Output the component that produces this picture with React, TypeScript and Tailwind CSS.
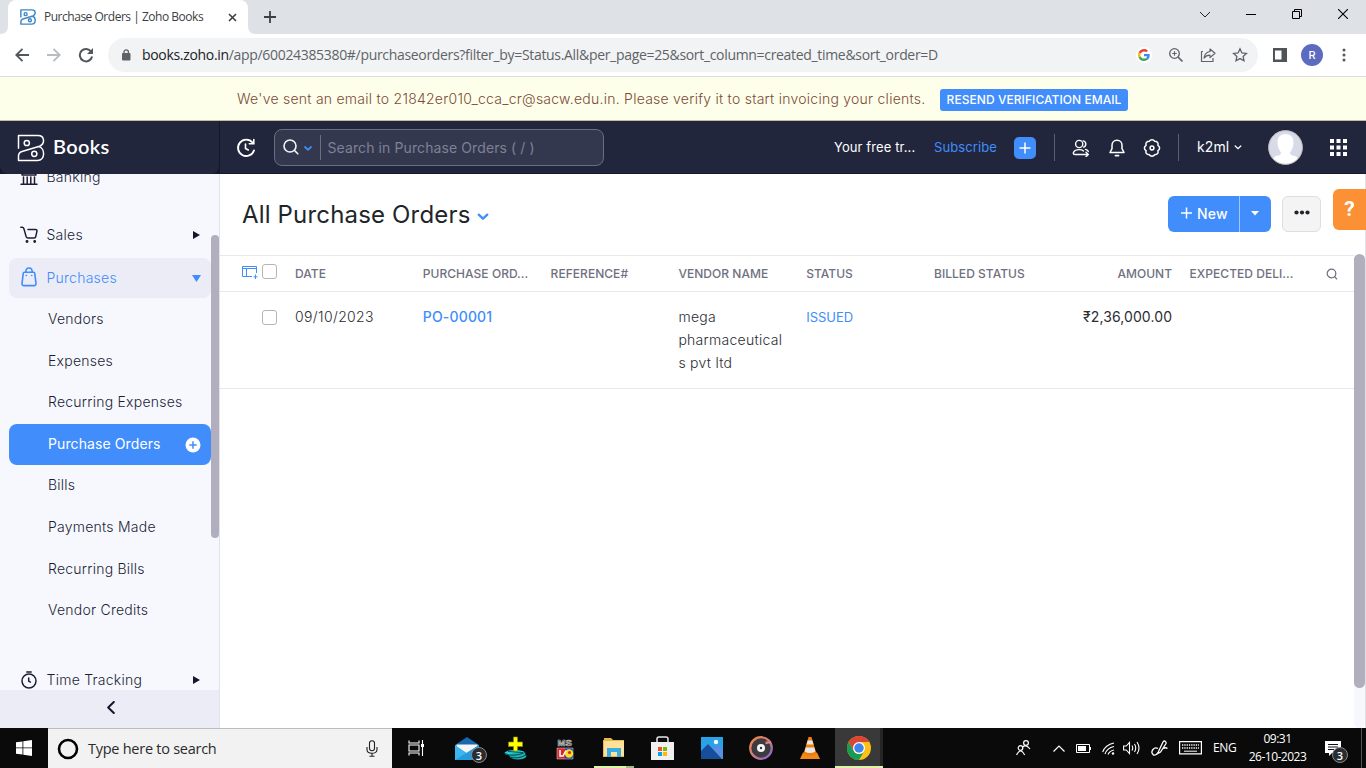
import React from "react";

const inter = "font-['Inter',sans-serif]";
const segoe = "font-['Open_Sans','Noto_Sans',sans-serif]";

function BooksMark({ size, stroke, width }: { size: number; stroke: string; width: number }) {
  return (
    <svg width={size} height={size} viewBox="0 0 28 28" fill="none" stroke={stroke} strokeWidth={width} className="shrink-0">
      <path d="M1.500 14.800V1.500H21C28 1.500 28.200 10 22.500 12.200L5 17.500C2.600 18.300 1.500 19.600 1.500 22V26.500H20.500C28.500 26.500 28.500 14 21.500 12.600" strokeLinejoin="round" />
      <circle cx="9.800" cy="9" r="2.600" />
      <circle cx="17.300" cy="19.800" r="2.600" />
    </svg>
  );
}

function TabStrip() {
  return (
    <div className="flex h-[34px] shrink-0 bg-[#dee1e6]">
      <svg width="8" height="34" className="shrink-0"><path d="M0 34Q8 34 8 26V34Z" fill="#fff" /></svg>
      <div className="flex w-[240px] shrink-0 items-center rounded-t-lg bg-white pl-3 pr-[11px]">
        <BooksMark size={16} stroke="#3f86c6" width={2.5} />
        <span className={`${segoe} ml-[8px] w-[170px] whitespace-nowrap text-[12px] leading-4 tracking-[-0.48px] text-[#3c4043]`}>
          Purchase Orders | Zoho Books
        </span>
        <svg width="9" height="9" viewBox="0 0 9 9" className="ml-auto" stroke="#3c4043" strokeWidth="1.6"><path d="M1 1l7 7M8 1l-7 7" /></svg>
      </div>
      <svg width="8" height="34" className="shrink-0"><path d="M8 34Q0 34 0 26V34Z" fill="#fff" /></svg>
      <svg width="12" height="12" viewBox="0 0 12 12" className="ml-2 mt-[11px]" stroke="#3c4043" strokeWidth="1.8"><path d="M6 0v12M0 6h12" /></svg>
      <div className="ml-auto flex h-7 items-center">
        <svg width="12" height="7" viewBox="0 0 12 7" fill="none" stroke="#222" className="mr-[35px]"><path d="M1 1l5 5 5-5" /></svg>
        <svg width="10" height="10" viewBox="0 0 10 10" stroke="#000" className="mr-9"><path d="M0 5.500h10" /></svg>
        <svg width="10" height="10" viewBox="0 0 10 10" fill="none" stroke="#000" className="mr-9"><path d="M.5 2.500h7v7h-7zM2.500 2.500v-2h7v7h-2" /></svg>
        <svg width="10" height="10" viewBox="0 0 10 10" stroke="#000" strokeWidth="1.100" className="mr-[18px]"><path d="M0 0l10 10M10 0L0 10" /></svg>
      </div>
    </div>
  );
}

function AddressBar() {
  return (
    <div className="flex h-[43px] shrink-0 items-center border-b border-[#dadce0] bg-white">
      <svg width="14" height="14" viewBox="0 0 14 14" fill="none" stroke="#53575b" strokeWidth="1.9" className="ml-[15px]"><path d="M14 7H1.500M7.500 .8L1.300 7l6.200 6.200" /></svg>
      <svg width="14" height="14" viewBox="0 0 14 14" fill="none" stroke="#b9bcbf" strokeWidth="1.900" className="ml-[18px]"><path d="M0 7h12.500M6.500 .8L12.700 7l-6.200 6.200" /></svg>
      <svg width="16" height="16" viewBox="0 0 16 16" fill="none" className="ml-[17px]"><path d="M13.200 4.700A6.200 6.200 0 1 0 14.100 9.500" stroke="#53575b" strokeWidth="2" /><path d="M15 1v6H9z" fill="#53575b" /></svg>
      <div className="ml-[14px] flex h-[34px] w-[1150px] shrink-0 items-center rounded-full bg-[#f1f3f4]">
        <svg width="10" height="12" viewBox="0 0 10 12" className="ml-[13px]"><rect x="1" y="4" width="8.500" height="7.500" rx="1" fill="#5f6368" /><path d="M3 4.500V3a2.200 2.200 0 0 1 4.400 0v1.500" fill="none" stroke="#5f6368" strokeWidth="1.300" /></svg>
        <span className={`${segoe} ml-[11px] whitespace-nowrap text-[14px] leading-5 tracking-[-0.32px] text-[#5f6368]`}>
          <span className="text-[#202124]">books.zoho.in</span>/app/60024385380#/purchaseorders?filter_by=Status.All&amp;per_page=25&amp;sort_column=created_time&amp;sort_order=D
        </span>
        <div className="ml-auto flex items-center pr-[10px]">
          <span className="mr-4 flex size-4 items-center justify-center rounded-full bg-white">
            <svg width="12" height="12" viewBox="0 0 48 48"><path fill="#EA4335" d="M24 9.500c3.540 0 6.710 1.220 9.210 3.600l6.850-6.850C35.900 2.380 30.470 0 24 0 14.620 0 6.510 5.380 2.560 13.220l7.980 6.190C12.430 13.720 17.740 9.500 24 9.500z" /><path fill="#4285F4" d="M46.980 24.550c0-1.570-.15-3.090-.38-4.550H24v9.020h12.940c-.58 2.960-2.260 5.480-4.780 7.180l7.730 6c4.510-4.180 7.090-10.360 7.090-17.650z" /><path fill="#FBBC05" d="M10.530 28.590c-.48-1.450-.76-2.990-.76-4.590s.27-3.140.76-4.590l-7.980-6.190C.92 16.460 0 20.120 0 24s.92 7.540 2.560 10.780l7.970-6.190z" /><path fill="#34A853" d="M24 48c6.480 0 11.930-2.130 15.890-5.810l-7.730-6c-2.150 1.450-4.920 2.300-8.160 2.300-6.260 0-11.570-4.220-13.470-9.910l-7.980 6.190C6.510 42.620 14.620 48 24 48z" /></svg>
          </span>
          <svg width="16" height="16" viewBox="0 0 16 16" fill="none" stroke="#5f6368" strokeWidth="1.300" className="mr-4"><circle cx="6.500" cy="6.500" r="4.800" /><path d="M10 10l4.500 4.500" strokeWidth="1.700" /><path d="M4.200 6.500h4.600M6.500 4.200v4.600" strokeWidth="1.100" /></svg>
          <svg width="16" height="16" viewBox="0 0 16 16" fill="none" stroke="#5f6368" strokeWidth="1.200" className="mr-4" strokeLinejoin="round"><path d="M3 4.500H1.500v10h11.500V11" /><path d="M10 2l5 4.300-5 4.300V8.200C7.500 8.200 5.500 9 4 11.200 4.400 7.500 6.500 5 10 4.500z" /></svg>
          <svg width="16" height="16" viewBox="0 0 16 16" fill="none" stroke="#5f6368" strokeWidth="1.300"><path d="M8 1.800l1.900 4.100 4.500.5-3.300 3 .9 4.400L8 11.600l-4 2.200.9-4.400-3.300-3 4.500-.5z" /></svg>
        </div>
      </div>
      <svg width="14" height="14" viewBox="0 0 14 14" className="ml-[15px]"><path fillRule="evenodd" fill="#505458" d="M0 0h14v14H0zM2 2.500h6.500v9H2z" /></svg>
      <span className={`${inter} ml-[14px] flex size-[22px] items-center justify-center rounded-full bg-[#5c6bc0] text-[11px] font-medium text-white`}>R</span>
      <svg width="4" height="14" viewBox="0 0 4 14" className="ml-[19px]" fill="#53575b"><circle cx="2" cy="2" r="1.500" /><circle cx="2" cy="7" r="1.500" /><circle cx="2" cy="12" r="1.500" /></svg>
    </div>
  );
}

function VerifyBanner() {
  return (
    <div className="flex h-11 shrink-0 items-center border-b border-[#c9bd97] bg-[#fdffea] pl-[237px]">
      <span className="w-[703px] whitespace-nowrap text-[14px] leading-5 font-light tracking-[0.25px] text-[#7c4a36]">
        We've sent an email to 21842er010_cca_cr@sacw.edu.in. Please verify it to start invoicing your clients.
      </span>
      <span className="mt-[2px] flex h-[22px] w-[188px] items-center justify-center whitespace-nowrap rounded-[3px] bg-[#408dfb] text-[12px] font-medium tracking-[0.06px] text-white">
        RESEND VERIFICATION EMAIL
      </span>
    </div>
  );
}

function AppHeader() {
  return (
    <div className="flex h-[53px] shrink-0 bg-[#15172b]">
      <div className="flex w-[219px] shrink-0 items-center rounded-b-lg bg-[#21263c] pl-[17px]">
        <BooksMark size={28} stroke="#fff" width={1.5} />
        <span className="-mt-[3px] ml-2 font-['Lato',sans-serif] text-[20px] leading-6 font-semibold tracking-[0.3px] text-white">Books</span>
      </div>
      <div className="ml-px flex min-w-0 flex-1 items-center border-b border-[#171a2d] bg-[#21263c]">
        <svg width="20" height="20" viewBox="0 0 20 20" fill="none" stroke="#fff" strokeWidth="1.900" className="mt-[2px] ml-4" strokeLinecap="round"><path d="M16.500 4.500A8.200 8.200 0 1 0 18 12.500" /><path d="M17.800 1.500v4.300h-4.500" strokeWidth="1.600" /><path d="M9.500 6v4.500l2.800 1.500" strokeWidth="1.600" /></svg>
        <div className="ml-[18px] flex h-[37px] w-[330px] shrink-0 items-center rounded-lg border border-[#6b6e81] bg-[#34384f]">
          <svg width="16" height="16" viewBox="0 0 16 16" fill="none" stroke="#f3f3f8" strokeWidth="1.600" className="ml-2" strokeLinecap="round"><circle cx="7" cy="7" r="6" /><path d="M11.500 11.500l3.300 3.300" /></svg>
          <svg width="8" height="5" viewBox="0 0 8 5" fill="none" stroke="#408dfb" strokeWidth="1.800" className="mt-[2px] ml-[5px]" strokeLinecap="round" strokeLinejoin="round"><path d="M1 1l3 2.800L7 1" /></svg>
          <span className="mr-[6.500px] ml-2 h-[25px] w-px bg-[#6b6e81]" />
          <span className="mt-px whitespace-nowrap text-[14px] tracking-[0.1px] text-[#7f8194]">Search in Purchase Orders ( / )</span>
        </div>
        <span className="mt-px ml-[230px] w-[100px] whitespace-nowrap text-[13px] tracking-[0.1px] text-white">Your free tr...</span>
        <span className="mt-px w-20 whitespace-nowrap text-[13px] tracking-[0.1px] text-[#408dfb]">Subscribe</span>
        <span className="mt-px flex h-[22px] w-[22px] items-center justify-center rounded-[5px] bg-[#408dfb]">
          <svg width="12" height="12" viewBox="0 0 12 12" stroke="#fff" strokeWidth="1.500"><path d="M6 .5v11M.5 6h11" /></svg>
        </span>
        <span className="ml-[18px] h-[27px] w-px bg-[#5b5e70]" />
        <svg width="18" height="18" viewBox="0 0 18 18" fill="none" stroke="#fff" strokeWidth="1.400" className="mt-px ml-[17px]" strokeLinecap="round" strokeLinejoin="round"><circle cx="7.200" cy="5" r="3.600" /><path d="M11.200 1.900a3.300 3.300 0 0 1 .5 6.300" /><path d="M9 15.500H3.200c-1.500 0-2.200-.8-1.700-2 .8-1.900 3-2.900 5.700-2.900 2 0 3.300.4 4.300 1.300M13.500 10.400c1.500.4 2.500 1.100 2.800 2.100M8.500 15.500H16M14 13.300l2.300 2.200-2.300 2.200" /></svg>
        <svg width="18" height="18" viewBox="0 0 18 18" fill="none" stroke="#fff" strokeWidth="1.500" className="mt-px ml-[18px]" strokeLinecap="round" strokeLinejoin="round"><path d="M9 1.200c-3 0-5 2.200-5 5v3.500l-2 3.800h14l-2-3.800V6.200c0-2.800-2-5-5-5z" /><path d="M7.500 16.600h3" strokeWidth="1.800" /></svg>
        <svg width="18" height="18" viewBox="0 0 18 18" fill="none" stroke="#fff" strokeWidth="1.500" className="mt-px ml-[17px]" strokeLinejoin="round"><path d="M6.300 2.300C6.900 1.200 7.800.8 9 .8s2.100.4 2.700 1.500c1.300 0 2.200.3 2.900 1.100.6.800.7 1.700.3 2.900 1.200.7 1.700 1.600 1.700 2.700s-.5 2-1.700 2.700c.4 1.200.3 2.100-.3 2.900-.7.800-1.600 1.100-2.900 1.100-.6 1.100-1.500 1.500-2.700 1.500s-2.100-.4-2.700-1.500c-1.300 0-2.200-.3-2.900-1.100-.6-.8-.7-1.700-.3-2.900C1.900 11 1.400 10.100 1.400 9s.5-2 1.700-2.700c-.4-1.200-.3-2.100.3-2.900.7-.8 1.600-1.100 2.900-1.100z" /><circle cx="9" cy="9" r="1.900" /></svg>
        <span className="ml-[17px] h-[27px] w-px bg-[#5b5e70]" />
        <span className="-mt-px ml-[18px] w-[37px] whitespace-nowrap text-[14px] tracking-[0.1px] text-white">k2ml</span>
        <svg width="8" height="5" viewBox="0 0 8 5" fill="none" stroke="#fff" strokeWidth="1.300" strokeLinecap="round"><path d="M1.200 1L4 3.700 6.800 1" /></svg>
        <svg width="35" height="35" viewBox="0 0 35 35" className="ml-[26px]"><defs><clipPath id="face"><circle cx="17.500" cy="17.500" r="16.500" /></clipPath></defs><circle cx="17.500" cy="17.500" r="17" fill="#d8dbe7" /><path clipPath="url(#face)" fill="#fff" d="M9.500 12c0-5 3.200-8 8-8s8 3 8 8c0 4-1.200 8-3.500 10.500.3 2.500 1.500 3 4.500 3.500 3 .6 4 2.500 4 9h-26c0-6.500 1-8.400 4-9 3-.5 4.200-1 4.500-3.500C10.700 20 9.500 16 9.500 12z" /><circle cx="17.500" cy="17.500" r="16.900" fill="none" stroke="#bbb9b7" strokeWidth="1" /></svg>
        <svg width="17" height="17" viewBox="0 0 17 17" fill="#fff" className="ml-[27px]">
          {[0, 6.5, 13].map((y) => [0, 6.500, 13].map((x) => <rect key={`${x}-${y}`} x={x} y={y} width="4" height="4" />))}
        </svg>
      </div>
    </div>
  );
}

const purchaseLinks = ["Vendors", "Expenses", "Recurring Expenses", "Purchase Orders", "Bills", "Payments Made", "Recurring Bills", "Vendor Credits"];

function NavRow({ icon, label, arrow, active = false }: { icon: React.ReactNode; label: string; arrow?: "right" | "down"; active?: boolean }) {
  return (
    <div className={`mx-[9px] flex h-10 w-[202px] shrink-0 items-center rounded-lg pl-[11px] pr-[10px] text-[14px] ${active ? "bg-[#ececf7] font-light tracking-[0.25px] text-[#408dfb]" : "font-light tracking-[0.25px] text-[#1b1f35]"}`}>
      <span className="-mt-px">{icon}</span>
      <span className="-mt-px ml-[8.500px] whitespace-nowrap">{label}</span>
      {arrow === "right" && <svg width="7" height="8" viewBox="0 0 7 8" className="ml-auto mr-[1px]"><path d="M0 0l7 4-7 4z" fill="#15172b" /></svg>}
      {arrow === "down" && <svg width="9" height="7" viewBox="0 0 9 7" className="ml-auto"><path d="M0 0h9L4.500 7z" fill="#408dfb" /></svg>}
    </div>
  );
}

function Sidebar() {
  const ink = { fill: "none", stroke: "currentColor", strokeLinecap: "round" as const, strokeLinejoin: "round" as const };
  return (
    <div className="flex w-[220px] shrink-0 flex-col border-r border-[#e2e2ea] bg-[#f7f8fe]">
      <div className="flex min-h-0 flex-1">
        <div className="flex w-[211px] shrink-0 flex-col overflow-hidden">
          <div className="-mt-[17px]" />
          <NavRow label="Banking" icon={<svg width="18" height="18" viewBox="0 0 18 18" {...ink} strokeWidth="1.500"><path d="M1 16.300h16M2 7h14M3.500 9v7M7.200 9v7M10.800 9v7M14.500 9v7M2 6l7-4.500L16 6" /></svg>} />
          <div className="h-[18px] shrink-0" />
          <NavRow label="Sales" arrow="right" icon={<svg width="18" height="18" viewBox="0 0 18 18" {...ink} strokeWidth="1.500"><path d="M.8 1.200h1.400c.9 0 1.300.4 1.600 1.200l2.400 8.400c.3.900.8 1.200 1.600 1.200h6.400c.9 0 1.300-.4 1.500-1.200l1.200-5.500c.2-1.200-.2-1.900-1.400-1.900H8" /><circle cx="7" cy="15.500" r=".7" fill="currentColor" /><circle cx="14.700" cy="15.500" r=".7" fill="currentColor" /></svg>} />
          <div className="h-[3px] shrink-0" />
          <NavRow label="Purchases" arrow="down" active icon={<svg width="18" height="20" viewBox="0 0 18 20" {...ink} strokeWidth="1.600" className="-mt-px"><path d="M4.300 5.300h9.400c.6 0 .9.300 1 .9l1.300 10.200c.1 1.400-.6 2.200-1.900 2.200H3.900c-1.300 0-2-.8-1.900-2.200L3.300 6.200c.1-.6.400-.9 1-.9zM5.800 5c0-2.700 1.200-4 3.200-4s3.200 1.300 3.200 4" /><path d="M6.200 8.500h.1M11.700 8.500h.1" strokeWidth="1.500" /></svg>} />
          <div className="h-px shrink-0" />
          {purchaseLinks.map((label) => {
            const current = label === "Purchase Orders";
            return (
              <div key={label} className={`mx-[9px] flex h-[41.600px] w-[202px] shrink-0 items-center rounded-lg pl-[39px] pr-[10px] text-[14px] ${current ? "bg-[#408dfb] tracking-[0.1px] text-white" : "font-light tracking-[0.24px] text-[#1b1f35]"}`}>
                <span className="-mt-[2.500px] whitespace-nowrap">{label}</span>
                {current && <svg width="16" height="16" viewBox="0 0 16 16" className="ml-auto"><circle cx="8" cy="8" r="7.500" fill="#fff" /><path d="M8 4.300v7.400M4.300 8h7.400" stroke="#408dfb" strokeWidth="1.500" /></svg>}
              </div>
            );
          })}
          <div className="h-[28.500px] shrink-0" />
          <NavRow label="Time Tracking" arrow="right" icon={<svg width="18" height="18" viewBox="0 0 18 18" {...ink} strokeWidth="1.500"><circle cx="9" cy="10" r="7" /><path d="M6.800 1h4.400M8.700 7v3.200l1.700 1" /></svg>} />
        </div>
        <div className="mt-[61px] h-[303px] w-2 shrink-0 rounded bg-[#b1afbd]" />
      </div>
      <div className="flex h-[38px] shrink-0 items-center justify-center bg-[#ececf7]">
        <svg width="8" height="13" viewBox="0 0 8 13" fill="none" stroke="#15172b" strokeWidth="2" strokeLinecap="round" strokeLinejoin="round" className="ml-0.5 -mt-[3px]"><path d="M6.800 1L1.200 6.500l5.600 5.500" /></svg>
      </div>
    </div>
  );
}

const Checkbox = () => <span className="block size-[15px] shrink-0 rounded-[3px] border border-[#b5b5b8] bg-white" />;
const columns = "grid grid-cols-[65px_repeat(8,127.800px)_1fr]";

function Main() {
  return (
    <div className="flex min-w-0 flex-1 bg-white">
      <div className="flex w-[1134px] shrink-0 flex-col">
        <div className="flex h-[81px] shrink-0 items-center">
          <h1 className="ml-[22px] whitespace-nowrap text-[24px] leading-8 tracking-[0.17px] text-[#212529]">All Purchase Orders</h1>
          <svg width="12" height="8" viewBox="0 0 12 8" fill="none" stroke="#408dfb" strokeWidth="2.300" strokeLinecap="round" strokeLinejoin="round" className="mt-1 ml-[6px]"><path d="M1.700 1.700L6 5.700l4.300-4" /></svg>
          <div className="-mt-px mr-[11px] ml-auto flex h-9 w-[103px] rounded-md bg-[#408dfb] text-white">
            <span className="-mt-[2px] flex w-[71px] items-center pl-[13px] text-[14px] font-medium tracking-[0.2px]">
              <svg width="11" height="12" viewBox="0 0 11 12" stroke="#fff" strokeWidth="1.500" className="mr-[5px]"><path d="M5.500 .5v11M0 6h11" /></svg>New
            </span>
            <span className="flex flex-1 items-center justify-center border-l border-[#a3c8fd] pr-[2px] pb-px">
              <svg width="8" height="5" viewBox="0 0 8 5"><path d="M0 0h8L4 4.500z" fill="#fff" /></svg>
            </span>
          </div>
          <span className="-mt-px mr-[33px] flex h-9 w-[39px] items-center justify-center rounded-md border border-[#dedede] bg-[#f4f4f4] pb-[3px]">
            <svg width="16" height="5" viewBox="0 0 16 5" fill="#212529"><circle cx="2.500" cy="2.500" r="2.100" /><circle cx="8" cy="2.500" r="2.100" /><circle cx="13.500" cy="2.500" r="2.100" /></svg>
          </span>
        </div>
        <div className={`${columns} h-[37px] shrink-0 items-center border-y border-[#e7e7f0] text-[12px] font-medium tracking-[0.04px] text-[#6f7080]`}>
          <div className="-mt-[4px] flex pl-[21px]">
            <svg width="17" height="15" viewBox="0 0 17 15" fill="none" stroke="#408dfb" className="mr-1"><path d="M15.500 9V2.500H1.500V12.500H11M1.500 4.500h14M5.500 4.500v8" /><path d="M14.500 10.500v4.500M12.500 12.800h4" /></svg>
            <Checkbox />
          </div>
          {["DATE", "PURCHASE ORD...", "REFERENCE#", "VENDOR NAME", "STATUS", "BILLED STATUS", "AMOUNT", "EXPECTED DELI..."].map((head) => (
            <span key={head} className={`whitespace-nowrap ${head === "AMOUNT" ? "pr-[7.500px] text-right" : "pl-[10px]"}`}>{head}</span>
          ))}
          <svg width="12" height="12" viewBox="0 0 12 12" fill="none" stroke="#6f7080" strokeWidth="1.200" className="ml-[19px]"><circle cx="5.500" cy="5.500" r="4.300" /><path d="M8.500 8.500l2.500 2.800" /></svg>
        </div>
        <div className={`${columns} h-[97px] shrink-0 items-start border-b border-[#e7e7f0] pt-[13px] text-[14px] leading-[23px] text-[#2b2d34]`}>
          <div className="flex pt-[5px] pl-[42px]"><Checkbox /></div>
          <span className="pl-[10px] font-light tracking-[0.36px]">09/10/2023</span>
          <span className="pl-[10px] font-medium tracking-[0.17px] text-[#408dfb]">PO-00001</span>
          <span />
          <span className="pr-3 pl-[10px] font-light tracking-[0.27px] whitespace-nowrap">mega<br />pharmaceutical<br />s pvt ltd</span>
          <span className="pt-px pl-[10px] text-[13px] text-[#408dfb]">ISSUED</span>
          <span />
          <span className="pr-[7.500px] text-right tracking-[0.1px]">₹2,36,000.00</span>
        </div>
      </div>
      <div className="relative flex w-[12px] shrink-0 border-r border-[#e2e2e6]">
        <div className="mt-[80px] h-[474px] w-[11px] rounded-md bg-[#f7f7fe]"><div className="h-[434px] rounded-md bg-[#b1afbd]" /></div>
        <span className="absolute top-[15px] -right-px flex h-[41px] w-[33px] items-center justify-center rounded-l-md bg-[#fb9034] font-['Roboto',sans-serif] text-[21px] font-bold text-white">?</span>
      </div>
    </div>
  );
}

function Badge() {
  return <span className={`${segoe} absolute top-[19px] flex size-4 items-center justify-center rounded-full border border-[#888] bg-[#292c30] text-[11px] leading-none font-semibold text-white`}>3</span>;
}

function TaskItem({ children, state }: { children: React.ReactNode; state?: "running" }) {
  return (
    <div className="relative flex h-10 w-[49px] shrink-0 items-center justify-center">
      {children}
      {state && <span className="absolute bottom-0 left-1 flex h-[2px] w-10 bg-[#def2ac]"><span className="ml-auto w-2 bg-[#a4b681]" /></span>}
    </div>
  );
}

function Taskbar() {
  return (
    <div className={`${segoe} flex h-10 shrink-0 items-center bg-[#0a0a0a] text-white`}>
      <div className="flex w-12 justify-center">
        <svg width="16" height="16" viewBox="0 0 16 16" fill="#fff"><path d="M0 2.300L6.500 1.400v6.100H0zM7.300 1.300L16 0v7.500H7.300zM0 8.300h6.500v6.300L0 13.700zM7.300 8.300H16V16l-8.700-1.300z" /></svg>
      </div>
      <div className="flex h-full w-[344px] items-center border-t border-[#bdbdbd] bg-[#f2f2f2] pl-[9px]">
        <svg width="22" height="22" viewBox="0 0 22 22" fill="none" stroke="#000" strokeWidth="2.600"><circle cx="11" cy="11" r="9" /></svg>
        <span className="ml-[9px] whitespace-nowrap text-[14.500px] tracking-[-0.26px] text-[#2b2b2b]">Type here to search</span>
        <svg width="12" height="17" viewBox="0 0 12 17" fill="none" stroke="#222" strokeWidth="1.100" className="mr-[14px] ml-auto"><rect x="3.500" y=".7" width="5" height="10" rx="2.500" /><path d="M1 7v2.500C1 12 3 13.300 6 13.300s5-1.300 5-3.800V7M6 13.300V16M3.500 16.300h5" /></svg>
      </div>
      <TaskItem>
        <svg width="17" height="16" viewBox="0 0 17 16" fill="none" stroke="#fff" strokeWidth="1.100"><path d="M1 .5v2.500h10V.5M1 15.500V13h10v2.500M1 5h10v6H1zM14.500 0v16" /><path d="M13 4h3v3h-3z" fill="#fff" stroke="none" /></svg>
      </TaskItem>
      <div className="flex pl-[2px]">
        <TaskItem>
          <svg width="24" height="23" viewBox="0 0 24 23" className="mr-[1px]"><path d="M0 8L12 0l12 8v15H0z" fill="#1767b1" /><path d="M1.500 7.500h21v2L12 16.500 1.500 9.500z" fill="#f5f5f5" /><path d="M0 8l12 8.500L24 8v15H0z" fill="#3cb7ee" /><path d="M0 23L24 8v15z" fill="#249cdd" /></svg>
          <span className="absolute inset-y-0 left-[28px]"><Badge /></span>
        </TaskItem>
        <TaskItem>
          <svg width="24" height="24" viewBox="0 0 24 24" className="mr-[2px]"><ellipse cx="11" cy="17" rx="10.500" ry="3" fill="#22d7dc" /><ellipse cx="14" cy="20" rx="8.500" ry="3.500" fill="#19b4b8" /><path d="M1 17.500q8 4 20-1M5 21q9 2.500 17-2M4 15.500l15 1" stroke="#06272a" strokeWidth=".8" fill="none" /><path d="M9.500 1h4v5h5v4.500h-5V15h-4v-4.500h-5V6h5z" fill="#ff0" stroke="#8b8812" strokeWidth=".7" /></svg>
        </TaskItem>
        <TaskItem>
          <svg width="18" height="23" viewBox="0 0 18 23" className="mr-[2px]"><path d="M1 11h8v11H1z" fill="#e1242a" /><path d="M9 11h8v11H9z" fill="#293bc0" /><path d="M1 11h16v11H1z" fill="none" stroke="#ddd" strokeWidth=".5" /><circle cx="13" cy="16.500" r="4.200" fill="#f5df20" /><path d="M4 13v6h3l3-5.500" fill="none" stroke="#fff" strokeWidth="1.500" /><circle cx="13.500" cy="15.500" r="1.600" fill="#e1242a" /><text x="1.500" y="8.500" fontSize="9.500" fontWeight="700" fontFamily="Liberation Sans" fill="#111" stroke="#c4c4c4" strokeWidth=".7">MS</text></svg>
        </TaskItem>
        <TaskItem state="running">
          <svg width="22" height="20" viewBox="0 0 22 20" className="mr-[2px]"><path d="M0 2h1V0h7l2 2h11v17H0z" fill="#e9b84a" /><path d="M1 3h20v15H1z" fill="#ffe29a" /><path d="M4 19v-9h14v9h-4v-5H8v5z" fill="#3aaee3" /></svg>
        </TaskItem>
        <TaskItem>
          <svg width="23" height="24" viewBox="0 0 23 24" className="mr-[2px]"><path d="M6 7V3q0-2 2-2h7q2 0 2 2v4" fill="none" stroke="#e8e8e8" strokeWidth="1.500" /><path d="M0 6h23v18H0z" fill="#f0f0f0" /><path d="M7 11h4v4H7z" fill="#f25022" /><path d="M12 11h4v4h-4z" fill="#7fba00" /><path d="M7 16h4v4H7z" fill="#00a4ef" /><path d="M12 16h4v4h-4z" fill="#ffb900" /></svg>
        </TaskItem>
        <TaskItem>
          <svg width="22" height="22" viewBox="0 0 22 22" className="mr-[2px]"><path d="M0 0h22v22H0z" fill="#2aa2e8" /><path d="M11 12l5-4 6 5v9H11z" fill="#5a8fe0" /><path d="M0 14l7-7 14 15H0z" fill="#174e9b" /><circle cx="15" cy="5" r="2.200" fill="#fff" /></svg>
        </TaskItem>
        <TaskItem>
          <svg width="24" height="24" viewBox="0 0 24 24" className="mr-[2px]"><defs><linearGradient id="disc" x2="1" y2="1"><stop stopColor="#f58a3c" /><stop offset=".5" stopColor="#d17b82" /><stop offset="1" stopColor="#7566d8" /></linearGradient></defs><circle cx="12" cy="12" r="10.800" fill="#3b3b40" stroke="url(#disc)" strokeWidth="2.200" /><circle cx="12" cy="12" r="4" fill="#f6f6f6" /><circle cx="12" cy="12" r="1.200" fill="#333" /><path d="M17.500 8V6.500h4.500" fill="none" stroke="#e2897c" strokeWidth="2" /></svg>
        </TaskItem>
        <TaskItem>
          <svg width="20" height="22" viewBox="0 0 20 22" className="mr-[2px]"><path d="M3 15.500h14L20 22H0z" fill="#f28a17" /><path d="M8.500 0h3l5 17q-6.500 4-13 0z" fill="#ee7e0b" /><path d="M7.700 3.500h4.600l1.200 4h-7zM5.700 10.500h8.600l1.100 4q-5.400 3-10.800 0z" fill="#e8e8e8" /></svg>
        </TaskItem>
        <div className="relative flex h-10 w-12 items-center justify-center border-r-[3px] border-[#252525] bg-[#393939]">
          <svg width="24" height="24" viewBox="0 0 48 48" className="ml-[2px]"><circle cx="24" cy="24" r="24" fill="#fbc116" /><path d="M24 12h20.800A24 24 0 0 0 3.200 12l10.400 18z" fill="#dc4437" /><path d="M3.200 12A24 24 0 0 0 24 48l10.400-18A12 12 0 0 1 13.600 30z" fill="#179b55" /><circle cx="24" cy="24" r="12" fill="#fff" /><circle cx="24" cy="24" r="9.500" fill="#3f83ed" /></svg>
          <span className="absolute bottom-0 left-0 -right-[3px] h-[2px] bg-[#def2ac]" />
        </div>
      </div>
      <div className="ml-auto flex h-full items-center">
        <svg width="15" height="16" viewBox="0 0 15 16" fill="none" stroke="#fff" strokeWidth="1.200" className="mr-[22px]"><circle cx="10" cy="3" r="2.400" /><circle cx="4.500" cy="8" r="2.300" /><path d="M6.500 7Q10 4 14 9M.6 15q4-8 8 0" /></svg>
        <svg width="12" height="7" viewBox="0 0 12 7" fill="none" stroke="#fff" strokeWidth="1.200" className="mr-[11px]"><path d="M.5 6.500L6 1l5.500 5.500" /></svg>
        <svg width="15" height="9" viewBox="0 0 15 9" className="mr-[11px]"><path d="M.5.5h13v8H.5z" fill="none" stroke="#fff" /><path d="M2 2h8v5H2zM14 3h1v3h-1z" fill="#fff" /></svg>
        <svg width="13" height="13" viewBox="0 0 13 13" fill="none" stroke="#fff" strokeWidth="1.100" className="mr-[8px]"><path d="M.7 10Q3 3 12 1M3 12Q5 6 12 4.500M6 12.500Q7.500 9 12 8" /><circle cx="11" cy="11.500" r="1.200" fill="#fff" stroke="none" /></svg>
        <svg width="17" height="14" viewBox="0 0 17 14" fill="none" stroke="#fff" strokeWidth="1.100" className="mr-[11px]"><path d="M.6 5h2.700L6.500 1.500v11L3.300 9H.6zM9 4.500q1.500 2.500 0 5M11.500 3q2.500 4 0 8M14 1q4 6 0 12" /></svg>
        <svg width="17" height="16" viewBox="0 0 17 16" fill="none" stroke="#fff" strokeWidth="1.300" className="mr-[11px]"><path d="M7.500 11.500L12 2q1-1.500 2.200-.8T15 3.500L9.500 12l-2.500 1.500zM16.500 8.500q-2-1.500-4 0M7 8.500Q4 7 2 9.500q-2.500 3 .5 5.500 3 .6 4.300-2.500" /></svg>
        <svg width="23" height="14" viewBox="0 0 23 14" className="mr-[11px]"><path d="M.6.6h21.800v12.300H.6z" fill="none" stroke="#fff" strokeWidth="1.200" /><path d="M3 4h17M3 7h17" stroke="#fff" strokeWidth="1.300" strokeDasharray="1.300 1" /><path d="M5 10.200h13" stroke="#fff" /></svg>
        <span className="w-[34px] text-[12px] tracking-[-0.4px]">ENG</span>
        <div className="w-[61px] whitespace-nowrap text-center text-[12px] leading-[18px] tracking-[-0.5px]"><div>09:31</div><div>26-10-2023</div></div>
        <div className="relative ml-[17px] flex h-full w-[41px] items-center">
          <svg width="16" height="15" viewBox="0 0 16 15"><path d="M0 0h16v12H7l-3 3v-3H0z" fill="#fff" /><path d="M3 3.500h10M3 6h10M3 8.500h6" stroke="#111" strokeWidth="1" /></svg>
          <span className="absolute inset-y-0 left-[7px]"><Badge /></span>
          <span className="absolute inset-y-0 right-[4px] w-px bg-[#555]" />
        </div>
      </div>
    </div>
  );
}

export default function App() {
  return (
    <div className={`${inter} flex h-[768px] w-[1366px] flex-col overflow-hidden bg-white`}>
      <TabStrip />
      <AddressBar />
      <VerifyBanner />
      <AppHeader />
      <div className="flex min-h-0 flex-1"><Sidebar /><Main /></div>
      <Taskbar />
    </div>
  );
}
